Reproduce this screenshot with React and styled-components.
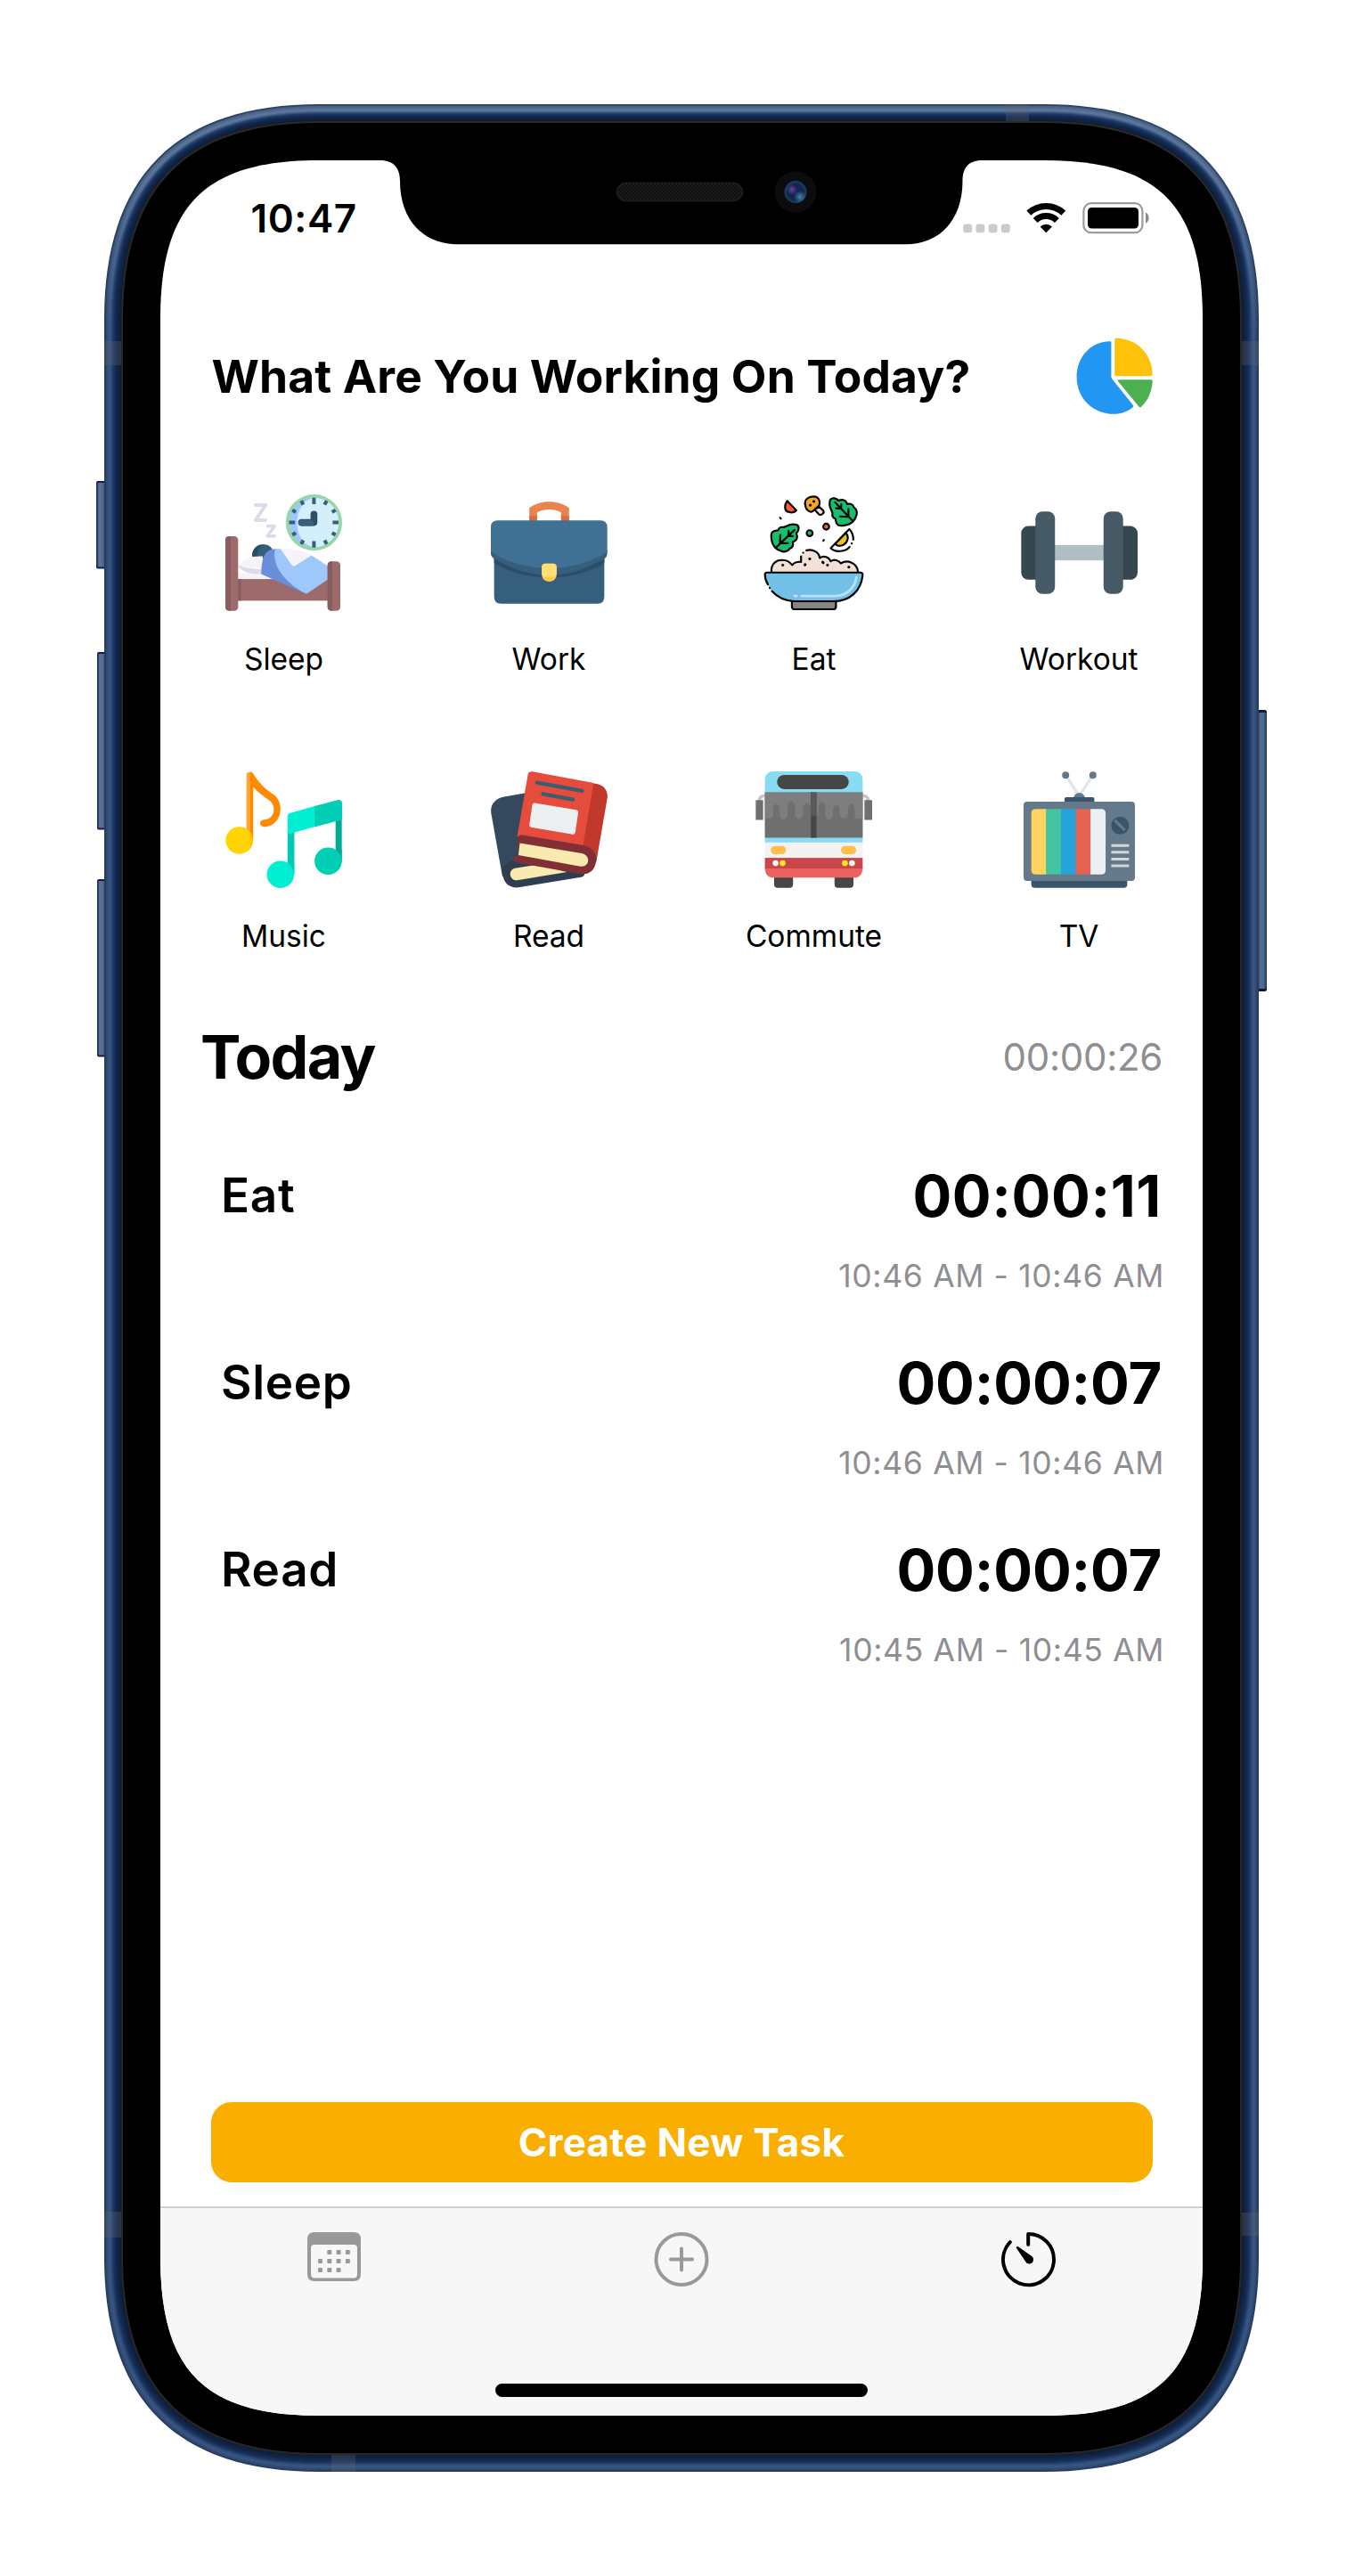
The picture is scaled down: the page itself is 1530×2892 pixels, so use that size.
import React from "react";
import styled, { createGlobalStyle } from "styled-components";

/* ---------- geometry helpers ---------- */

// Rounded rectangle with continuous corners: `l` is the reach of a corner
// along each side, `k` the distance of its control points.
const squircle = (x, y, w, h, l, k) => {
  const r = x + w;
  const b = y + h;
  return (
    `M${x + l} ${y}H${r - l}C${r - k} ${y} ${r} ${y + k} ${r} ${y + l}` +
    `V${b - l}C${r} ${b - k} ${r - k} ${b} ${r - l} ${b}` +
    `H${x + l}C${x + k} ${b} ${x} ${b - k} ${x} ${b - l}` +
    `V${y + l}C${x} ${y + k} ${x + k} ${y} ${x + l} ${y}Z`
  );
};

const shell = (inset) => {
  const l = 241 - inset;
  const k = (8 * (60.5 - inset * 0.293) - l) / 3;
  return squircle(inset, inset, 1296 - inset * 2, 2658 - inset * 2, l, k);
};

/* ---------- styles ---------- */

const GlobalStyle = createGlobalStyle`
  body { margin: 0; background: #fff; }
  * { box-sizing: border-box; }
`;

const Page = styled.div`
  width: 1530px;
  height: 2892px;
  padding: 117px;
  background: #fff;
  font-family: Inter, "Liberation Sans", sans-serif;
  color: #000;
`;

const Device = styled.div`
  position: relative;
  width: 1296px;
  height: 2658px;
  padding: 63px;
`;

const DeviceArt = styled.svg`
  position: absolute;
  inset: 0;
  overflow: visible;
`;

const Screen = styled.div`
  position: relative;
  display: flex;
  flex-direction: column;
  width: 1170px;
  height: 2532px;
  background: #fff;
  clip-path: path("${squircle(0, 0, 1170, 2532, 178, 50)}");
`;

const Notch = styled.svg`
  position: absolute;
  top: 0;
  left: 240px;
`;

const StatusBar = styled.div`
  display: flex;
  justify-content: space-between;
  align-items: center;
  height: 130px;
  padding: 0 59px 0 101.5px;
`;

const Clock = styled.span`
  font-size: 44px;
  font-weight: 600;
  letter-spacing: 0.6px;
`;

const Header = styled.header`
  display: flex;
  justify-content: space-between;
  align-items: center;
  height: 104px;
  margin-top: 60px;
  padding: 0 56px 0 57.5px;
`;

const Heading = styled.h1`
  margin: 0;
  font-size: 51.5px;
  font-weight: 660;
  line-height: 64px;
  letter-spacing: 0.15px;
  white-space: nowrap;
`;

const TaskGrid = styled.div`
  display: grid;
  grid-template-columns: repeat(4, 152px);
  justify-content: space-between;
  row-gap: 106px;
  margin-top: 81px;
  padding: 0 63px 0 62.5px;
`;

const TaskButton = styled.div`
  display: flex;
  flex-direction: column;
  align-items: center;
  gap: 34px;
`;

const TaskIcon = styled.svg`
  display: block;
  width: 131px;
  height: 131px;
`;

const TaskLabel = styled.span`
  font-size: 33.5px;
  line-height: 40px;
  white-space: nowrap;
`;

const SummaryRow = styled.div`
  display: flex;
  justify-content: space-between;
  align-items: center;
  height: 80px;
  margin-top: 75px;
  padding: 0 45px;
`;

const SummaryTitle = styled.h2`
  margin: 0;
  font-size: 68px;
  font-weight: 700;
  line-height: 80px;
  letter-spacing: -1.6px;
`;

const SummaryTotal = styled.span`
  font-size: 42px;
  letter-spacing: -0.3px;
  color: #8e8e93;
`;

const EntryList = styled.div`
  display: flex;
  flex-direction: column;
  margin-top: 77px;
`;

const Entry = styled.div`
  display: flex;
  flex-direction: column;
  gap: 27px;
  height: 210px;
  padding: 0 43px 0 68px;
`;

const EntryTop = styled.div`
  display: flex;
  justify-content: space-between;
  align-items: center;
  height: 80px;
  padding-right: 3px;
`;

const EntryName = styled.span`
  padding-bottom: 2px;
  font-size: 53px;
  font-weight: 600;
  line-height: 64px;
  letter-spacing: 0.7px;
`;

const EntryTime = styled.span`
  font-size: 65px;
  font-weight: 670;
  line-height: 80px;
  letter-spacing: ${(p) => p.$tracking}px;
`;

const EntryRange = styled.span`
  align-self: flex-end;
  font-size: 35.5px;
  line-height: 46px;
  letter-spacing: 0.65px;
  color: #8e8e93;
`;

const CreateButton = styled.div`
  display: flex;
  justify-content: center;
  align-items: center;
  height: 90px;
  margin: auto 56.5px 27px;
  border-radius: 23px;
  background: #f9ae00;
  color: #fff;
  font-size: 44px;
  font-weight: 660;
  letter-spacing: 0.25px;
`;

const TabBar = styled.nav`
  display: flex;
  flex-direction: column;
  justify-content: space-between;
  align-items: center;
  height: 235px;
  padding-bottom: 21px;
  border-top: 2px solid #d0d0d0;
  background: #f7f7f7;
`;

const Tabs = styled.div`
  display: grid;
  grid-template-columns: repeat(3, 390px);
  justify-items: center;
  padding-top: 25px;
`;

const TabIcon = styled.svg`
  display: block;
  width: 66px;
  height: 66px;
  color: ${(p) => (p.$active ? "#000" : "#999")};
`;

const HomeIndicator = styled.div`
  width: 418px;
  height: 15px;
  border-radius: 8px;
  background: #000;
`;

/* ---------- device ---------- */

const RIM = [
  // side colour, top colour
  ["#283a5b", "#293d60"],
  ["#293f63", "#34496e"],
  ["#2e466d", "#48628a"],
  ["#314d77", "#4c668c"],
  ["#34527d", "#506b90"],
  ["#365480", "#587396"],
  ["#365480", "#5b7698"],
  ["#324f7b", "#587396"],
  ["#2a4672", "#48638a"],
  ["#213c66", "#35517b"],
  ["#1d365f", "#233f6b"],
  ["#183059", "#1a3560"],
  ["#152b51", "#163058"],
  ["#12284b", "#132a4f"],
  ["#112547", "#112749"],
  ["#102344", "#102445"],
  ["#0f2141", "#0f2242"],
  ["#0e1f3e", "#0e203f"],
  ["#101c33", "#101c33"],
  ["#252525", "#2a2826"],
  ["#2c2a28", "#2e2a26"],
];

const KEYS = [
  { x: -9, y: 423, w: 12, h: 98.5 },
  { x: -8, y: 615, w: 11, h: 199.5 },
  { x: -8, y: 870, w: 11, h: 199.5 },
];

function DeviceFrame() {
  return (
    <DeviceArt width="1296" height="2658" viewBox="0 0 1296 2658">
      <defs>
        {RIM.map(([side, top], i) => (
          <linearGradient key={i} id={`rim${i}`} gradientUnits="userSpaceOnUse" x1="0" y1="0" x2="0" y2="260">
            <stop offset="0" stopColor={top} />
            <stop offset="0.3" stopColor={top} />
            <stop offset="1" stopColor={side} />
          </linearGradient>
        ))}
        <linearGradient id="keyLeft" x1="0" x2="1" y1="0" y2="0">
          <stop offset="0" stopColor="#1c2c55" />
          <stop offset="0.1" stopColor="#22345e" />
          <stop offset="0.22" stopColor="#546c95" />
          <stop offset="0.45" stopColor="#5a7297" />
          <stop offset="0.75" stopColor="#455d80" />
        </linearGradient>
        <linearGradient id="keyRight" x1="1" x2="0" y1="0" y2="0">
          <stop offset="0" stopColor="#16325a" />
          <stop offset="0.1" stopColor="#2a466e" />
          <stop offset="0.22" stopColor="#4a6488" />
          <stop offset="0.5" stopColor="#566c8c" />
          <stop offset="0.75" stopColor="#3c547a" />
        </linearGradient>
      </defs>
      {KEYS.map((k) => (
        <g key={k.y}>
          <rect x={k.x} y={k.y} width={k.w} height={k.h} rx="2" fill="#141d45" />
          <rect x={k.x} y={k.y + 2} width={k.w} height={k.h - 4} rx="1.5" fill="url(#keyLeft)" />
        </g>
      ))}
      <rect x="1292" y="680" width="13" height="316" rx="2.5" fill="#0d1a38" />
      <rect x="1292" y="683" width="13" height="310" rx="2" fill="url(#keyRight)" />
      {RIM.map((_, i) => (
        <path key={i} d={shell(i)} fill={`url(#rim${i})`} />
      ))}
      <g fill="#5f6672" opacity="0.3">
        <rect x="0" y="266" width="19" height="27" />
        <rect x="1277" y="266" width="19" height="27" />
        <rect x="0" y="2366" width="19" height="29" />
        <rect x="1277" y="2367" width="19" height="26" />
        <rect x="1012" y="0" width="26" height="19" />
        <rect x="255" y="2639" width="27" height="19" />
      </g>
      <path d={shell(21)} fill="#000" />
    </DeviceArt>
  );
}

function NotchArt() {
  return (
    <Notch width="690" height="96" viewBox="0 0 690 96">
      <defs>
        <radialGradient id="lens" cx="0.5" cy="0.5" r="0.5">
          <stop offset="0" stopColor="#15234c" />
          <stop offset="0.7" stopColor="#14244a" />
          <stop offset="1" stopColor="#1d4468" />
        </radialGradient>
        <radialGradient id="flareA" cx="0.34" cy="0.4" r="0.24">
          <stop offset="0" stopColor="#6a3f9c" />
          <stop offset="1" stopColor="#6a3f9c" stopOpacity="0" />
        </radialGradient>
        <radialGradient id="flareB" cx="0.7" cy="0.72" r="0.28">
          <stop offset="0" stopColor="#3c87a8" />
          <stop offset="1" stopColor="#3c87a8" stopOpacity="0" />
        </radialGradient>
        <pattern id="mesh" width="4" height="4" patternUnits="userSpaceOnUse">
          <rect width="4" height="4" fill="#0e0e0e" />
          <path d="M0 0h2v2h-2zM2 2h2v2h-2z" fill="#1c1c1c" />
        </pattern>
      </defs>
      <path
        d="M7 0C22 0 29 9 29 23C29 66 54 94.3 94 94.3H596C636 94.3 660.500 66 660.500 23C660.500 9 667 0 682 0Z"
        fill="#000"
      />
      <rect x="272.5" y="25.5" width="141" height="20" rx="10" fill="url(#mesh)" stroke="#1e1e1e" strokeWidth="1.5" />
      <circle cx="473" cy="35.5" r="23.3" fill="#0c0c0e" />
      <circle cx="473" cy="35.5" r="12.5" fill="url(#lens)" />
      <circle cx="473" cy="35.5" r="12.5" fill="url(#flareA)" />
      <circle cx="473" cy="35.5" r="12.5" fill="url(#flareB)" />
    </Notch>
  );
}

function StatusIcons() {
  return (
    <svg width="210" height="36" viewBox="1081 227 210 36">
      <g fill="#cbcbcb">
        {[1081.3, 1095.5, 1109.7, 1123.9].map((x) => (
          <rect key={x} x={x} y="251.5" width="9.8" height="9.8" rx="2.8" />
        ))}
      </g>
      <g fill="none" stroke="#000">
        <path d="M1154.8 239.2A28.5 28.5 0 0 1 1193.8 239.2" strokeWidth="7.2" />
        <path d="M1162.2 247.6A17.2 17.2 0 0 1 1186.4 247.6" strokeWidth="7" />
      </g>
      <path d="M1174.3 261.2L1167.6 254.4A10 10 0 0 1 1181 254.4Z" fill="#000" />
      <rect x="1216.4" y="228.2" width="66" height="33" rx="8.5" fill="none" stroke="#9c9c9c" strokeWidth="2.2" />
      <rect x="1221" y="233" width="57" height="23.6" rx="4.5" fill="#000" />
      <path d="M1286 238.4C1290.8 240.6 1290.8 248.6 1286 250.8Z" fill="#8a8a8a" />
    </svg>
  );
}

function PieIcon() {
  return (
    <svg width="86" height="87" viewBox="1208 380 86 87">
      <path d="M1246.5 384.3H1244C1223 385.5 1208.6 403 1208.6 424.4C1208.6 448 1227 465.8 1250.5 465.8C1258.5 465.8 1266 462.8 1271.6 458.2C1272.4 457.5 1272.4 456.6 1271.8 455.8L1248.2 426.2C1247.6 425.3 1247.4 424.8 1247.4 423.8V385.3Q1247.4 384.3 1246.5 384.3Z" fill="#2196f3" />
      <path d="M1251.2 382.3Q1251.2 380.4 1253 380.4C1276 381 1293.6 399 1293.6 421.2Q1293.6 423.2 1291.8 423.2H1253Q1251.2 423.2 1251.2 421.4Z" fill="#ffc10a" />
      <path d="M1255.6 427.2H1292Q1293.8 427.2 1293.7 429C1293 441 1288.5 450.6 1281 457.8Q1279.6 459 1278.4 457.6L1255 429Q1254 427.2 1255.6 427.2Z" fill="#4caf50" />
    </svg>
  );
}

/* ---------- task icons ---------- */

const SleepIcon = () => (
  <TaskIcon viewBox="100 75 394 394">
    <circle cx="399" cy="170" r="95" fill="#96d8a4" />
    <circle cx="399" cy="170" r="84" fill="#9ec7fc" />
    <path d="M399 86A84 84 0 0 1 399 254C364 248 342 212 342 170C342 128 364 92 399 86Z" fill="#d3effb" />
    <g stroke="#365e7d" strokeWidth="12" fill="none">
      <path d="M399 86v22M399 233v22M315 170h20M462 170h20" />
      <path d="M356 97l7 13M326 128l12 7M326 212l12 -7M356 243l7 -13M442 97l-7 13M472 128l-12 7M472 212l-12 -7M442 243l-7 -13" />
    </g>
    <path d="M357 170H399V142" fill="none" stroke="#2b4d66" strokeWidth="23" strokeLinecap="round" strokeLinejoin="round" />
    <path d="M357 171H388" stroke="#365e7d" strokeWidth="21" strokeLinecap="round" />
    <g fill="none" stroke="#dddaec" strokeLinecap="round" strokeLinejoin="round">
      <path d="M202 111H236L202 162H236" strokeWidth="12" />
      <path d="M243 182H266L242 216H266" strokeWidth="11" />
    </g>
    <path d="M143 340L240 345L262 362H143Z" fill="#f6f4f9" />
    <rect x="140" y="361" width="308" height="73" fill="#9d6b6b" />
    <rect x="143" y="361" width="10" height="73" fill="#895d5e" />
    <path d="M190 284C190 230 262 232 262 276L230 292Z" fill="#365e7d" />
    <path d="M190 284C190 258 207 246 228 247C212 256 208 268 209 284Z" fill="#2b4d66" />
    <path d="M145 317C160 290 195 282 226 284V326Z" fill="#f6f4f9" />
    <path d="M145 315C170 324 198 328 224 328V344C190 344 160 340 145 319Z" fill="#dddaec" />
    <path d="M270 262C315 252 362 266 394 282L334 322Z" fill="#f6f4f9" />
    <path d="M270 259C232 260 222 288 221 344L372 411L296 290Z" fill="#6a8fd8" />
    <path d="M268 259H286L325 315Q329 319 335 316L391 281L446 317V362L374 411C310 380 254 320 268 259Z" fill="#9ec7fc" />
    <rect x="100" y="216" width="43" height="252" rx="13" fill="#9d6b6b" />
    <path d="M118 216H113Q100 217 100 229V455Q100 468 113 468H118Z" fill="#895d5e" />
    <rect x="445" y="301" width="43" height="167" rx="13" fill="#9d6b6b" />
    <path d="M461 301H458Q445 302 445 314V455Q445 468 458 468H461Z" fill="#895d5e" />
  </TaskIcon>
);

const WorkIcon = () => (
  <TaskIcon viewBox="993 75 394 394">
    <path d="M1123 170V121C1160 93 1220 93 1257 121V170H1230V136C1205 123 1175 123 1149 136V170Z" fill="#e9844f" />
    <path d="M1123 148h26v20h-26zM1230 148h27v20h-27z" fill="#d66f40" />
    <path d="M1004 270H1376V421Q1376 444 1353 444H1027Q1004 444 1004 421Z" fill="#365e7d" />
    <path d="M1004 288C1110 368 1270 368 1376 288V307C1270 371 1110 371 1004 307Z" fill="#2b4d66" />
    <path d="M993 262H1386V275Q1386 285 1377 292C1270 354 1110 354 1004 292Q993 285 993 275Z" fill="#365e7d" />
    <path d="M993 186Q993 163 1016 163H1363Q1386 163 1386 186V269C1275 343 1105 343 993 269Z" fill="#407093" />
    <path d="M1165 321Q1165 309 1177 309H1203Q1215 309 1215 321V345C1215 378 1165 378 1165 345Z" fill="#fbc855" />
    <path d="M1165 321Q1165 309 1177 309H1203Q1215 309 1215 321V343Q1214 354 1202 354H1178Q1166 354 1165 343Z" fill="#ffdf72" />
  </TaskIcon>
);

const Leaf = ({ transform }) => (
  <g transform={transform}>
    <path
      d="M-34 34C-50 20 -52 -14 -44 -20C-38 -26 -32 -24 -25 -26C-24 -34 -16 -38 -8 -36C-2 -36 -2 -38 4 -40C14 -46 30 -46 38 -44C48 -38 44 -22 36 -16C40 -6 42 8 24 14C28 24 22 34 14 36C6 48 -8 48 -16 44C-24 42 -30 38 -34 34Z"
      fill="#14c06e"
    />
    <path d="M-33 33L30 -27M-18 -10L-19 18L8 18M10 -24L9 -7L24 -6" fill="none" />
  </g>
);

const EatIcon = () => (
  <TaskIcon viewBox="86 75 394 394">
    <g stroke="#000" strokeWidth="6.5" strokeLinecap="round" strokeLinejoin="round">
      <path d="M193 97C182 112 184 130 196 134C206 138 218 136 224 129Z" fill="#ff5a36" />
      <path d="M286 127L300 142C308 148 320 138 315 130L300 116Z" fill="#f4e0d4" />
      <path d="M254 110C250 92 266 82 282 82C298 82 306 96 302 110C298 120 288 120 284 128C276 140 256 132 254 110Z" fill="#f5a623" />
      <path d="M271 112h.5M283 99h.5" strokeWidth="9" fill="none" />
      <Leaf transform="translate(188 222)" />
      <Leaf transform="translate(382 132) scale(-1 1) rotate(-90) scale(1 -1)" />
      <circle cx="269" cy="206" r="10" fill="#14c06e" />
      <circle cx="325" cy="184" r="10" fill="#ff5a36" />
      <path d="M169 154l3 3M317 229l-2 3" fill="none" />
      <path d="M340 257L403 192C413 203 417 216 416 228M404 252C390 270 356 272 340 257M411 241h.5" fill="none" />
      <path d="M355 243L391 205C404 220 396 238 384 245C374 250 362 250 355 243Z" fill="#f2c31c" />
      <path d="M140 338C138 310 156 296 176 297C194 296 204 306 210 314C217 305 230 302 240 304V285C244 268 258 262 272 263C290 264 302 278 303 290C316 280 334 286 340 301C352 292 368 298 374 308C396 294 430 306 432 338Z" fill="#f2e1d6" stroke="none" />
      <path d="M140 336C138 310 156 296 176 297C194 296 204 306 210 314C217 305 230 302 240 303V284M247 272h.5M258 264C284 258 302 274 303 290C316 280 334 286 340 301C352 292 368 298 374 308C396 294 430 306 432 336" fill="none" />
      <path d="M178 314h.5M254 312l-1 1M269 293h.5M313 304l2 2M329 314h.5M401 321h.5" strokeWidth="9" fill="none" />
      <path d="M209 436H358V453Q358 463 348 463H219Q209 463 209 453Z" fill="#848484" />
      <path d="M119 346Q118 339 126 339H440Q449 339 448 348C442 402 404 436 350 436H218C182 430 158 420 142 402C128 386 120 366 119 346Z" fill="#72c0e8" stroke="none" />
      <path d="M128 379C121 368 118 356 118 346Q118 339 126 339H440Q449 339 448 348C442 402 404 436 350 436H216C184 434 160 422 142 402M134 391h.5" fill="none" />
      <path d="M427 355C422 392 392 418 356 418H242M218 418h7" stroke="#bde0ff" strokeWidth="8.5" fill="none" />
    </g>
  </TaskIcon>
);

const WorkoutIcon = () => (
  <TaskIcon viewBox="976 75 394 394">
    <rect x="977" y="182" width="80" height="181" rx="24" fill="#37474f" />
    <rect x="1290" y="182" width="80" height="181" rx="24" fill="#37474f" />
    <rect x="1085" y="246" width="176" height="52" fill="#b0bec5" />
    <rect x="1025" y="133" width="66" height="278" rx="24" fill="#455a64" />
    <rect x="1255" y="133" width="66" height="278" rx="24" fill="#455a64" />
  </TaskIcon>
);

const MusicIcon = () => (
  <TaskIcon viewBox="100 77 394 394">
    <path d="M180 89V310" stroke="#ffa733" strokeWidth="18" strokeLinecap="round" />
    <path d="M183 77Q190 78 193 84C222 128 240 140 264 156C302 186 290 258 236 264H230Q218 262 217 252Q219 240 230 240C268 240 274 194 248 175C226 160 208 146 194 130V312H183Z" fill="#ff8a00" />
    <circle cx="147" cy="310" r="46" fill="#ffd400" />
    <path d="M183 281C195 296 195 324 183 340Z" fill="#ffc000" />
    <path d="M472 238H493V385H472Z" fill="#00ab94" />
    <path d="M310 282H333V425H310Z" fill="#00c9b1" />
    <path d="M310 290V226Q311 220 317 218L401 194V264Z" fill="#00efd3" />
    <path d="M401 194L481 173Q493 172 494 183V240L401 265Z" fill="#00cfb6" />
    <circle cx="286" cy="425" r="46" fill="#00efd3" />
    <circle cx="447" cy="380" r="46" fill="#00cfb6" />
    <path d="M310 386C327 399 332 412 332 430V386Z" fill="#00c9b1" />
    <path d="M472 341C487 352 493 366 493 384V341Z" fill="#00ab94" />
  </TaskIcon>
);

const ReadIcon = () => (
  <TaskIcon viewBox="993 77 394 394">
    <path d="M1128 147L1038 163C1008 168 990 190 994 218L1032 432L1130 390Z" fill="#35495e" />
    <path d="M1092 378C1050 374 1024 396 1034 432C1040 458 1060 472 1086 469L1298 434Q1308 432 1310 422L1200 380Z" fill="#2c3e50" />
    <path d="M1150 392L1074 404C1050 410 1054 446 1082 445L1250 417Z" fill="#f9eab0" />
    <path d="M1330 115L1350 119C1376 123 1390 144 1386 168L1349 382L1300 330Z" fill="#c0392b" />
    <path d="M1118 88Q1121 76 1134 78L1340 116L1304 328L1082 296Z" fill="#e64c3c" />
    <path d="M1082 308Q1083 290 1101 292L1306 327C1336 333 1353 354 1348 384C1342 414 1322 428 1294 423L1084 386Q1069 382 1070 370Q1074 358 1090 360Z" fill="#802f34" />
    <path d="M1091 319L1300 354C1332 362 1326 402 1296 398L1086 360Z" fill="#f9eab0" />
    <path d="M1133 190Q1134 183 1141 184L1282 207Q1289 209 1288 216L1278 284Q1276 291 1269 290L1128 266Q1122 264 1123 257Z" fill="#ecf0f1" />
    <path d="M1149 115L1301 143M1169 153L1270 172" stroke="#3c5d70" strokeWidth="13" strokeLinecap="round" />
  </TaskIcon>
);

const CommuteIcon = () => (
  <TaskIcon viewBox="86 77 394 394">
    <path d="M99 176Q100 159 120 159M467 176Q466 159 446 159" fill="none" stroke="#c6c6c6" strokeWidth="11" />
    <path d="M87 174h25v67h-25zM454 174h26v67h-26z" fill="#6f6f6f" />
    <path d="M149 430H213V458Q213 470 201 470H161Q149 470 149 458ZM353 430H417V458Q417 470 405 470H365Q353 470 353 458Z" fill="#464646" />
    <path d="M118 107Q118 77 148 77H418Q448 77 448 107V320H118Z" fill="#87dbf3" />
    <rect x="159" y="89" width="242" height="48" rx="24" fill="#464646" />
    <rect x="118" y="148" width="330" height="153" fill="#6f6f6f" />
    <path
      d="M118 148H448V235Q421 243 421 224V198Q410 176 398 198V224Q384 248 371 224V200Q360 178 348 200V228Q335 252 322 228V190Q310 170 299 190V225H273V196Q259 172 247 196V226Q234 250 220 226V190Q207 166 195 190V226Q181 252 168 226V198Q157 176 146 198V224Q140 242 118 235Z"
      fill="#7e7e7e"
    />
    <rect x="273" y="148" width="19" height="153" fill="#464646" />
    <rect x="273" y="148" width="19" height="80" fill="#595959" />
    <rect x="118" y="317" width="330" height="53" fill="#f3f3f3" />
    <rect x="138" y="329" width="51" height="28" rx="14" fill="#ffbe4a" />
    <rect x="375" y="329" width="51" height="28" rx="14" fill="#ffbe4a" />
    <path d="M118 400H448Q448 436 418 436H148Q118 436 118 400Z" fill="#ee6162" />
    <rect x="118" y="369" width="330" height="36" fill="#ca464a" />
    <circle cx="154" cy="387" r="10" fill="#f3f3f3" />
    <circle cx="178" cy="387" r="10" fill="#ffe11f" />
    <circle cx="388" cy="387" r="10" fill="#ffe11f" />
    <circle cx="412" cy="387" r="10" fill="#f3f3f3" />
  </TaskIcon>
);

const TvIcon = () => (
  <TaskIcon viewBox="976 77 394 394">
    <path d="M1127 90L1170 156M1219 90L1176 156" stroke="#e1e6e9" strokeWidth="10" />
    <circle cx="1127" cy="90" r="12" fill="#64798a" />
    <circle cx="1219" cy="90" r="12" fill="#64798a" />
    <path d="M1154 168A19 19 0 0 1 1192 168Z" fill="#64798a" />
    <path d="M1123 182V170Q1123 164 1129 164H1218Q1224 164 1224 170V182Z" fill="#3a556a" />
    <path d="M1011 440H1335V458Q1335 470 1323 470H1023Q1011 470 1011 458Z" fill="#3a556a" />
    <rect x="985" y="179" width="376" height="268" rx="12" fill="#64798a" />
    <path d="M1062 204H1026Q1011 204 1011 219V410Q1011 425 1026 425H1062Z" fill="#fdd462" />
    <rect x="1061" y="204" width="51" height="221" fill="#44c4a1" />
    <rect x="1111" y="204" width="51" height="221" fill="#27a2db" />
    <rect x="1161" y="204" width="51" height="221" fill="#e56353" />
    <path d="M1211 204H1247Q1262 204 1262 219V410Q1262 425 1247 425H1211Z" fill="#ebf0f3" />
    <circle cx="1311" cy="260" r="30" fill="#3a556a" />
    <path d="M1293 242L1327 276" stroke="#64798a" strokeWidth="10" />
    <path d="M1281 327.500h60M1281 350h60M1281 373h60M1281 395.500h60" stroke="#d5d6dc" strokeWidth="9" />
  </TaskIcon>
);

/* ---------- tab icons ---------- */

const DOTS = [
  [1, 0], [2, 0], [3, 0],
  [0, 1], [1, 1], [2, 1], [3, 1],
  [0, 2], [1, 2], [2, 2],
];

const CalendarIcon = () => (
  <TabIcon viewBox="342 2504 66 66">
    <path
      fillRule="evenodd"
      fill="currentColor"
      d="M353 2506H397Q405 2506 405 2514V2553Q405 2561 397 2561H353Q345 2561 345 2553V2514Q345 2506 353 2506ZM353 2520Q349 2520 349 2524V2553Q349 2557.500 353 2557.500H397Q401 2557.500 401 2553V2524Q401 2520 397 2520Z"
    />
    {DOTS.map(([c, r]) => (
      <rect key={`${c}-${r}`} x={357 + c * 10.3} y={2526 + r * 10} width="5" height="5" rx="1" fill="currentColor" />
    ))}
  </TabIcon>
);

const PlusIcon = () => (
  <TabIcon viewBox="731.5 2504 66 66">
    <g fill="none" stroke="currentColor" strokeWidth="4" strokeLinecap="round">
      <circle cx="764.5" cy="2536.500" r="28.5" />
      <path d="M764.5 2524.500V2548.500M752.5 2536.500H776.5" />
    </g>
  </TabIcon>
);

const TimerIcon = () => (
  <TabIcon $active viewBox="1122 2504 66 66">
    <path
      d="M1154.2 2520V2508C1170.500 2508 1183 2521 1183 2536.500A28.500 28.500 0 1 1 1133.800 2517.200"
      fill="none"
      stroke="currentColor"
      strokeWidth="4"
      strokeLinecap="round"
      strokeLinejoin="round"
    />
    <path d="M1140.700 2523.400Q1141.200 2521.400 1143 2522.200L1158.600 2533.200C1162.500 2537.500 1157.500 2544.200 1152.200 2540.400Z" fill="currentColor" />
  </TabIcon>
);

/* ---------- data ---------- */

const TASKS = [
  { label: "Sleep", Icon: SleepIcon },
  { label: "Work", Icon: WorkIcon },
  { label: "Eat", Icon: EatIcon },
  { label: "Workout", Icon: WorkoutIcon },
  { label: "Music", Icon: MusicIcon },
  { label: "Read", Icon: ReadIcon },
  { label: "Commute", Icon: CommuteIcon },
  { label: "TV", Icon: TvIcon },
];

const ENTRIES = [
  { name: "Eat", time: "00:00:11", range: "10:46 AM - 10:46 AM", tracking: 0.6 },
  { name: "Sleep", time: "00:00:07", range: "10:46 AM - 10:46 AM", tracking: -0.2 },
  { name: "Read", time: "00:00:07", range: "10:45 AM - 10:45 AM", tracking: -0.2 },
];

export default function App() {
  return (
    <Page>
      <GlobalStyle />
      <Device>
        <DeviceFrame />
        <Screen>
          <StatusBar>
            <Clock>10:47</Clock>
            <StatusIcons />
          </StatusBar>
          <Header>
            <Heading>What Are You Working On Today?</Heading>
            <PieIcon />
          </Header>
          <TaskGrid>
            {TASKS.map(({ label, Icon }) => (
              <TaskButton key={label}>
                <Icon />
                <TaskLabel>{label}</TaskLabel>
              </TaskButton>
            ))}
          </TaskGrid>
          <SummaryRow>
            <SummaryTitle>Today</SummaryTitle>
            <SummaryTotal>00:00:26</SummaryTotal>
          </SummaryRow>
          <EntryList>
            {ENTRIES.map((e) => (
              <Entry key={e.name}>
                <EntryTop>
                  <EntryName>{e.name}</EntryName>
                  <EntryTime $tracking={e.tracking}>{e.time}</EntryTime>
                </EntryTop>
                <EntryRange>{e.range}</EntryRange>
              </Entry>
            ))}
          </EntryList>
          <CreateButton>Create New Task</CreateButton>
          <TabBar>
            <Tabs>
              <CalendarIcon />
              <PlusIcon />
              <TimerIcon />
            </Tabs>
            <HomeIndicator />
          </TabBar>
          <NotchArt />
        </Screen>
      </Device>
    </Page>
  );
}
